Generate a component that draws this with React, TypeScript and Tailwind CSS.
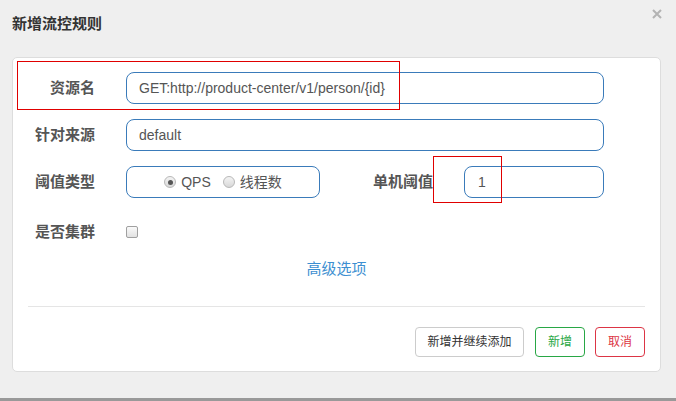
import React from "react";

const font = { fontFamily: '"Liberation Sans", "Noto Sans CJK SC", sans-serif' };

function Radio({ checked }: { checked?: boolean }) {
  return (
    <span className="w-[12px] h-[12px] rounded-full border border-[#b8b8b8] bg-gradient-to-b from-[#f4f4f4] to-[#d8d8d8] flex items-center justify-center shrink-0">
      {checked && <span className="w-[5px] h-[5px] rounded-full bg-[#555]" />}
    </span>
  );
}

export default function App() {
  return (
    <div
      className="w-[676px] h-[401px] bg-[#efefef] flex flex-col relative overflow-hidden"
      style={font}
    >
      <div className="h-[57px] flex items-start justify-between pl-3 pr-[14px] shrink-0">
        <div className="mt-[14px] text-[15px] leading-[20px] font-bold text-[#333]">新增流控规则</div>
        <svg className="mt-[9px]" width="10" height="10" viewBox="0 0 10 10">
          <path d="M1 1L9 9M9 1L1 9" stroke="#b3b3b3" strokeWidth="2" />
        </svg>
      </div>

      <div className="ml-3 w-[649px] h-[315px] border border-[#dddddd] rounded-[5px] bg-white flex flex-col shrink-0">
        <div className="flex flex-col gap-[15px] pt-[14px]">
          <div className="flex items-center h-[32px] gap-[31px]">
            <div className="w-[82px] text-right text-[15px] font-bold text-[#555]">资源名</div>
            <div className="w-[478px] h-[32px] border border-[#3a7bba] rounded-[8px] flex items-center px-3 text-[14px] text-[#555]">
              GET:http://product-center/v1/person/{"{id}"}
            </div>
          </div>
          <div className="flex items-center h-[32px] gap-[31px]">
            <div className="w-[82px] text-right text-[15px] font-bold text-[#555]">针对来源</div>
            <div className="w-[478px] h-[32px] border border-[#3a7bba] rounded-[8px] flex items-center px-3 text-[14px] text-[#555]">
              default
            </div>
          </div>
          <div className="flex items-center h-[32px]">
            <div className="w-[82px] text-right text-[15px] font-bold text-[#555]">阈值类型</div>
            <div className="ml-[31px] w-[194px] h-[32px] border border-[#3a7bba] rounded-[8px] flex items-center justify-center text-[14px] text-[#555]">
              <Radio checked />
              <span className="ml-[5px]">QPS</span>
              <span className="ml-[12px]"><Radio /></span>
              <span className="ml-[5px]">线程数</span>
            </div>
            <div className="w-[113px] text-right text-[15px] font-bold text-[#555]">单机阈值</div>
            <div className="ml-[31px] w-[140px] h-[32px] border border-[#3a7bba] rounded-[8px] flex items-center px-[13px] text-[14px] text-[#555]">
              1
            </div>
          </div>
          <div className="flex items-center h-[32px] gap-[31px] mt-[3px]">
            <div className="w-[82px] text-right text-[15px] font-bold text-[#555]">是否集群</div>
            <span className="w-[12px] h-[12px] rounded-[2px] border border-[#a0a0a0] bg-gradient-to-b from-[#fafafa] to-[#e2e2e2]" />
          </div>
        </div>
        <div className="mt-[11px] text-center text-[15px] leading-[20px] text-[#3d8fd1]">高级选项</div>
        <div className="mx-[15px] mt-[27px] h-px bg-[#e5e5e5]" />
        <div className="mt-[20px] flex justify-end pr-[15px] gap-[10px]">
          <button className="w-[109px] h-[30px] border border-[#cccccc] rounded-[4px] bg-white text-[12px] text-[#333]">新增并继续添加</button>
          <button className="ml-[1px] w-[50px] h-[30px] border border-[#28a745] rounded-[4px] bg-white text-[12px] text-[#28a745]">新增</button>
          <button className="w-[50px] h-[30px] border border-[#dc3545] rounded-[4px] bg-white text-[12px] text-[#dc3545]">取消</button>
        </div>
      </div>

      <div className="flex-1" />
      <div className="h-[3px] bg-[#999] shrink-0" />

      <div className="absolute left-[17px] top-[61px] w-[383px] h-[49px] border border-[#e00000]" />
      <div className="absolute left-[433px] top-[156px] w-[69px] h-[47px] border border-[#e00000]" />
    </div>
  );
}
